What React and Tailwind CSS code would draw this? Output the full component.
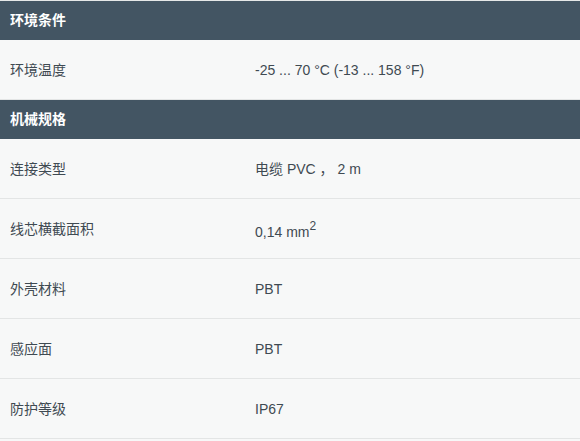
import React from "react";

const sections = [
  {
    title: "环境条件",
    rows: [["环境温度", "-25 ... 70 °C (-13 ... 158 °F)"]],
  },
  {
    title: "机械规格",
    rows: [
      ["连接类型", "电缆 PVC ， 2 m"],
      ["线芯横截面积", "sup"],
      ["外壳材料", "PBT"],
      ["感应面", "PBT"],
      ["防护等级", "IP67"],
    ],
  },
];

function Value({ text }) {
  if (text === "sup") {
    return (
      <span className="relative top-[3px]">
        0,14 mm<sup className="text-[12px] relative -top-[7px]">2</sup>
      </span>
    );
  }
  return <span>{text}</span>;
}

export default function App() {
  return (
    <div
      className="w-[580px] min-h-[441px] bg-[#f7f8f8] border-t border-[#e6e8e8] text-[14px] text-[#3f4a52]"
      style={{ fontFamily: '"Liberation Sans", "Noto Sans CJK SC", sans-serif' }}
    >
      {sections.map((section) => (
        <div key={section.title}>
          <div className="h-[39px] bg-[#435563] flex items-center px-[10px] text-white font-bold">
            {section.title}
          </div>
          {section.rows.map(([label, value]) => (
            <div
              key={label}
              className="h-[60px] flex items-center border-b border-[#e3e5e5]"
            >
              <div className="w-[255px] pl-[10px] pt-[1px]">{label}</div>
              <div className="flex-1 pt-[1px]">
                <Value text={value} />
              </div>
            </div>
          ))}
        </div>
      ))}
    </div>
  );
}
